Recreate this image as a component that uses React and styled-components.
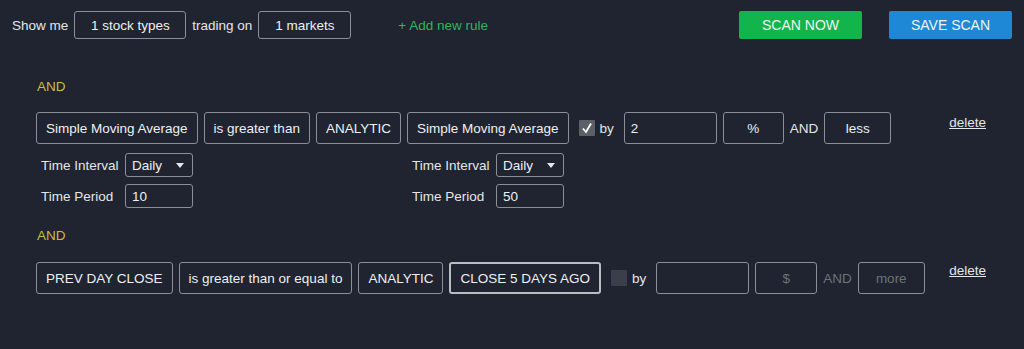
import styled, { createGlobalStyle } from "styled-components";

const GlobalStyle = createGlobalStyle`
  html, body {
    margin: 0;
    padding: 0;
    background: #1f2430;
  }
  body {
    font-family: "Liberation Sans", Arial, sans-serif;
    font-size: 13.5px;
    color: #e4e6ea;
  }
`;

const Page = styled.div`
  width: 1024px;
  height: 349px;
  background: #1f2430;
  box-sizing: border-box;
  overflow: hidden;
`;

const TopBar = styled.div`
  display: flex;
  align-items: center;
  gap: 6px;
  padding: 11px 12px 0 12px;
  height: 28px;
`;

const Label = styled.span`
  color: #e4e6ea;
  white-space: nowrap;
`;

const Chip = styled.div`
  height: 28px;
  box-sizing: border-box;
  width: ${(p) => p.$w}px;
  border: 1px solid #8b8f96;
  border-radius: 3px;
  display: flex;
  align-items: center;
  justify-content: center;
  color: #eef0f2;
`;

const AddRule = styled.a`
  margin-left: 41px;
  color: #2eb55c;
  cursor: pointer;
`;

const ActionButton = styled.button`
  margin-left: ${(p) => (p.$first ? "auto" : "21px")};
  width: 123px;
  height: 28px;
  border: none;
  border-radius: 2px;
  background: ${(p) => p.$bg};
  color: #eef3f0;
  font-family: "Liberation Sans", Arial, sans-serif;
  font-size: 14px;
  cursor: pointer;
`;

const Rules = styled.div`
  padding: 40px 38px 0 36px;
  display: flex;
  flex-direction: column;
`;

const Rule = styled.div`
  display: flex;
  flex-direction: column;
  margin-bottom: 20px;
`;

const AndTitle = styled.div`
  color: #cdbb3a;
  line-height: 16px;
  margin-left: 1px;
  margin-bottom: ${(p) => p.$mb}px;
`;

const RuleRow = styled.div`
  display: flex;
  align-items: flex-start;
  gap: 6px;
`;

const FieldGroup = styled.div`
  display: flex;
  flex-direction: column;
  gap: 7px;
`;

const Field = styled.div`
  height: 32px;
  box-sizing: border-box;
  padding: 0 ${(p) => (p.$w ? 0 : 9)}px;
  width: ${(p) => (p.$w ? `${p.$w}px` : "auto")};
  border: ${(p) => (p.$focus ? "2px solid #b9bcc1" : "1px solid #8b8f96")};
  border-radius: 3px;
  display: flex;
  align-items: center;
  justify-content: ${(p) => (p.$left ? "flex-start" : "center")};
  padding-left: ${(p) => (p.$left ? "6px" : undefined)};
  color: ${(p) => (p.$dim ? "#6c717a" : "#eef0f2")};
  white-space: nowrap;
`;

const Inline = styled.div`
  display: flex;
  align-items: center;
  height: 32px;
  gap: 5px;
  margin: 0 ${(p) => (p.$tight ? 0 : 4)}px;
  color: ${(p) => (p.$dim ? "#6c717a" : "#e4e6ea")};
`;

const Check = styled.span`
  width: 16px;
  height: 16px;
  border-radius: 1px;
  background: ${(p) => (p.$on ? "#5b5f68" : "#3a3f49")};
  display: flex;
  align-items: center;
  justify-content: center;
`;

const Params = styled.div`
  display: flex;
  flex-direction: column;
  gap: 7px;
  padding-left: 5px;
  margin-top: 2px;
`;

const ParamRow = styled.div`
  display: flex;
  align-items: center;
`;

const ParamLabel = styled.span`
  width: 84px;
  color: #e4e6ea;
`;

const SmallBox = styled.div`
  width: 68px;
  height: 24px;
  box-sizing: border-box;
  border: 1px solid #8b8f96;
  border-radius: 3px;
  display: flex;
  align-items: center;
  justify-content: space-between;
  padding: 0 8px 0 6px;
  color: #eef0f2;
`;

const Delete = styled.a`
  margin-left: auto;
  margin-top: ${(p) => p.$mt}px;
  color: #e4e6ea;
  text-decoration: underline;
  cursor: pointer;
`;

const Caret = () => (
  <svg width="8" height="5" viewBox="0 0 8 5">
    <path d="M0 0 L8 0 L4 5 Z" fill="#e4e6ea" />
  </svg>
);

const Tick = () => (
  <svg width="12" height="12" viewBox="0 0 12 12">
    <path d="M2 6.5 L5 10 L10 1.5" stroke="#ffffff" strokeWidth="1.8" fill="none" />
  </svg>
);

const TimeParams = ({ period }) => (
  <Params>
    <ParamRow>
      <ParamLabel>Time Interval</ParamLabel>
      <SmallBox>
        Daily
        <Caret />
      </SmallBox>
    </ParamRow>
    <ParamRow>
      <ParamLabel>Time Period</ParamLabel>
      <SmallBox>{period}</SmallBox>
    </ParamRow>
  </Params>
);

export default function App() {
  return (
    <Page>
      <GlobalStyle />
      <TopBar>
        <Label>Show me</Label>
        <Chip $w={112}>1 stock types</Chip>
        <Label>trading on</Label>
        <Chip $w={93}>1 markets</Chip>
        <AddRule>+ Add new rule</AddRule>
        <ActionButton $first $bg="#12b54c">
          SCAN NOW
        </ActionButton>
        <ActionButton $bg="#1f88d6">SAVE SCAN</ActionButton>
      </TopBar>

      <Rules>
        <Rule>
          <AndTitle $mb={17}>AND</AndTitle>
          <RuleRow>
            <FieldGroup>
              <Field>Simple Moving Average</Field>
              <TimeParams period="10" />
            </FieldGroup>
            <Field>is greater than</Field>
            <Field>ANALYTIC</Field>
            <FieldGroup>
              <Field>Simple Moving Average</Field>
              <TimeParams period="50" />
            </FieldGroup>
            <Inline>
              <Check $on>
                <Tick />
              </Check>
              by
            </Inline>
            <Field $w={93} $left>
              2
            </Field>
            <Field $w={61}>%</Field>
            <Inline $tight>AND</Inline>
            <Field $w={67}>less</Field>
            <Delete $mt={3}>delete</Delete>
          </RuleRow>
        </Rule>

        <Rule>
          <AndTitle $mb={18}>AND</AndTitle>
          <RuleRow>
            <Field>PREV DAY CLOSE</Field>
            <Field>is greater than or equal to</Field>
            <Field>ANALYTIC</Field>
            <Field $focus>CLOSE 5 DAYS AGO</Field>
            <Inline>
              <Check />
              by
            </Inline>
            <Field $w={93} $left />
            <Field $w={62} $dim>
              $
            </Field>
            <Inline $dim $tight>
              AND
            </Inline>
            <Field $w={67} $dim>
              more
            </Field>
            <Delete $mt={1}>delete</Delete>
          </RuleRow>
        </Rule>
      </Rules>
    </Page>
  );
}
